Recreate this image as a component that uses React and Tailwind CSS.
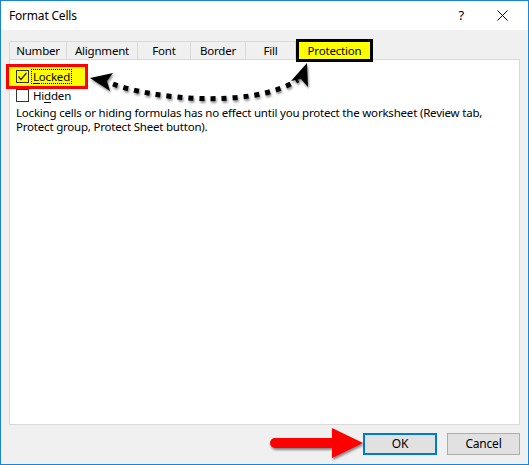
export default function App() {
  const tabs = [
    { label: "Number", w: "w-[57px]" },
    { label: "Alignment", w: "w-[71px]" },
    { label: "Font", w: "w-[53px]" },
    { label: "Border", w: "w-[55px]" },
    { label: "Fill", w: "w-[51px] border-r" },
  ];
  return (
    <div className="relative w-[529px] h-[465px] border border-[#1883d7] bg-[#f0f0f0] flex flex-col font-['Noto_Sans',sans-serif] text-[11.5px] tracking-[-0.2px] text-black overflow-hidden">
      <div className="h-[29px] bg-white flex items-center pl-[8px] shrink-0 text-[12px]">
        <span className="flex-1">Format Cells</span>
        <span className="mr-[33px] text-[13px]">?</span>
        <svg width="11" height="11" viewBox="0 0 11 11" className="mr-[20px]">
          <path d="M0.5 0.5L10.5 10.5M10.5 0.5L0.5 10.5" stroke="#000" strokeWidth="1" />
        </svg>
      </div>
      <div className="flex-1 flex flex-col px-[8px] pt-[11px] pb-[9px]">
        <div className="flex items-end h-[18px]">
          {tabs.map((t) => (
            <div
              key={t.label}
              className={`${t.w} h-[18px] border-t border-l border-[#d9d9d9] flex items-center justify-center leading-none`}
            >
              {t.label}
            </div>
          ))}
          <div className="relative z-10 w-[77px] h-[23px] mb-[-3px] border-[3px] border-black bg-[#ffff00] flex items-center justify-center leading-none">
            Protection
          </div>
        </div>
        <div className="bg-white border border-[#d9d9d9] h-[366px] flex flex-col">
          <div className="ml-[-4px] mt-[4px] w-[82px] h-[25px] border-[3px] border-[#ff0000] bg-[#ffff00] flex items-center pl-[7px] gap-[2px]">
            <div className="w-[13px] h-[13px] border border-[#333] flex items-center justify-center">
              <svg width="11" height="11" viewBox="0 0 11 11">
                <path d="M1.5 5.5L4 8.5L9.5 2" stroke="#222" strokeWidth="1.2" fill="none" />
              </svg>
            </div>
            <span className="border border-dotted border-black px-[1px] leading-[13px]">
              <span className="underline underline-offset-2">L</span>ocked
            </span>
          </div>
          <div className="ml-[6px] flex items-center gap-[4px] h-[13px]">
            <div className="w-[13px] h-[13px] border border-[#333] bg-white" />
            <span className="leading-none">
              Hi<span className="underline underline-offset-2">d</span>den
            </span>
          </div>
          <div className="ml-[6px] mt-[4px] leading-[14px] whitespace-nowrap">
            Locking cells or hiding formulas has no effect until you protect the worksheet (Review tab,
            <br />
            Protect group, Protect Sheet button).
          </div>
        </div>
        <div className="flex justify-end gap-[10px] mt-[8px]">
          <button className="w-[74px] h-[22px] border-2 border-[#0078d7] bg-[#e1e1e1] text-[12px] leading-none">
            OK
          </button>
          <button className="w-[73px] h-[22px] border border-[#adadad] bg-[#e1e1e1] text-[12px] leading-none">
            Cancel
          </button>
        </div>
      </div>

      <svg
        className="absolute left-[-1px] top-[-1px] pointer-events-none drop-shadow-[1px_2px_1px_rgba(0,0,0,0.45)]"
        width="529"
        height="465"
        viewBox="0 0 529 465"
      >
        <path
          d="M113 84 C150 98, 250 110, 298 80"
          stroke="#000"
          strokeWidth="5"
          strokeDasharray="5 6"
          fill="none"
        />
        <polygon points="90,78 113,73 107,81 110,91" fill="#000" />
        <polygon points="307,63 308,87 301,79 291,81" fill="#000" />
        <rect x="270" y="438" width="66" height="10" rx="5" fill="#ff0000" />
        <polygon points="332,428 363,443 332,458" fill="#ff0000" />
      </svg>
    </div>
  );
}
